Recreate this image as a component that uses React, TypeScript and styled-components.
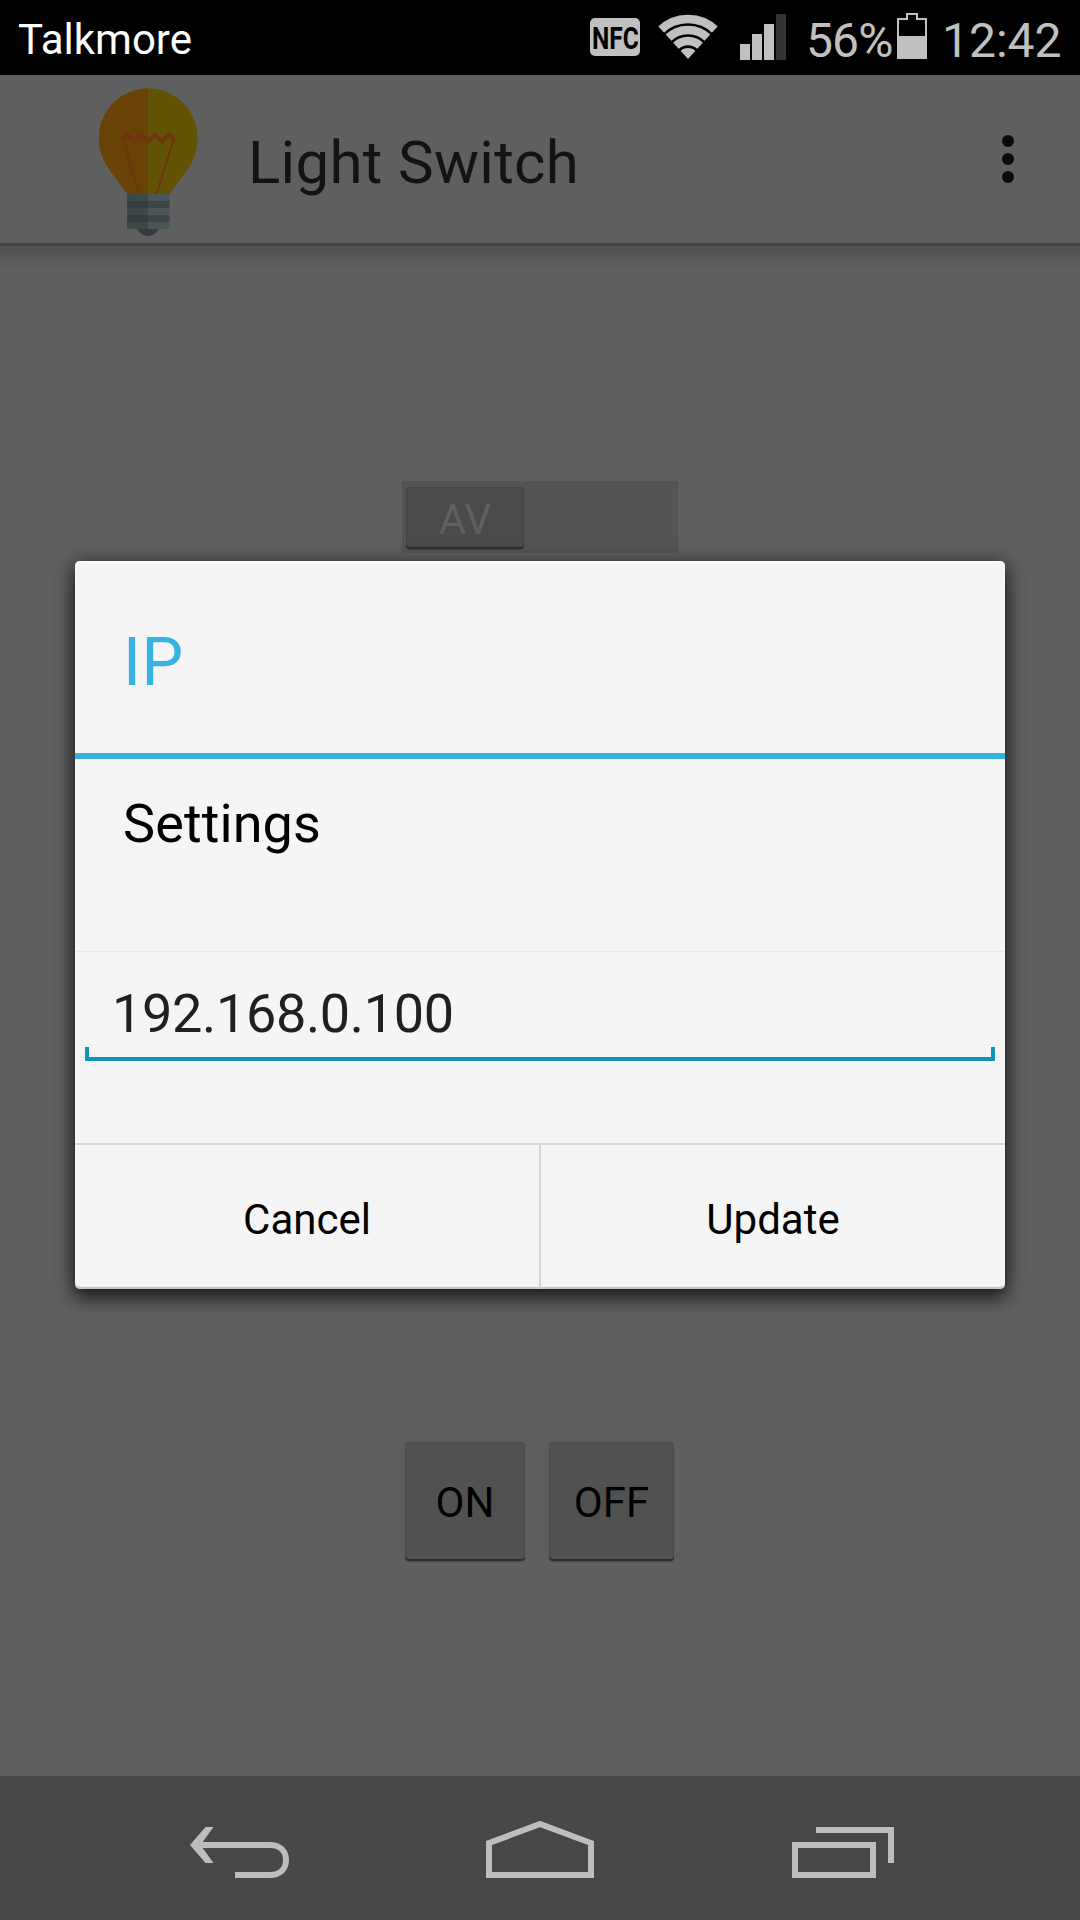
import React from 'react';
import styled, { createGlobalStyle } from 'styled-components';

const GlobalStyle = createGlobalStyle`
  *, *::before, *::after { box-sizing: border-box; }
  body { margin: 0; background: #5f5f5f; }
`;

const Screen = styled.div`
  position: relative;
  display: flex;
  flex-direction: column;
  width: 1080px;
  height: 1920px;
  overflow: hidden;
  background: #5f5f5f;
  font-family: Roboto, 'Noto Sans', sans-serif;
  color: #000;
`;

const Label = styled.span<{ $size: number; $spacing?: number; $color?: string; $weight?: number }>`
  display: block;
  white-space: pre;
  font-size: ${p => p.$size}px;
  line-height: 1.2;
  letter-spacing: ${p => p.$spacing ?? 0}px;
  font-weight: ${p => p.$weight ?? 400};
  color: ${p => p.$color ?? 'inherit'};
`;

const StatusBar = styled.header`
  display: flex;
  align-items: flex-start;
  justify-content: space-between;
  flex: none;
  height: 75px;
  padding: 0 19px 0 18px;
  background: #000;
`;

const Carrier = styled.div`
  padding-top: 15px;
`;

const StatusIcons = styled.div`
  display: flex;
  align-items: flex-start;
`;

const StatusGlyph = styled.svg<{ $gap: number }>`
  display: block;
  flex: none;
  overflow: visible;
  margin-right: ${p => p.$gap}px;
`;

const StatusText = styled.div<{ $width: number }>`
  width: ${p => p.$width}px;
  padding-top: 12px;
`;

const ActionBar = styled.div`
  display: flex;
  align-items: flex-start;
  flex: none;
  height: 171px;
  padding: 11px 66px 0 98px;
  background: #5f5f5f;
  border-bottom: 3px solid #444;
`;

const ActionTitle = styled.h1`
  flex: 1;
  margin: 0;
  padding: 41px 0 0 48px;
`;

const MenuButton = styled.button`
  display: flex;
  flex-direction: column;
  gap: 6px;
  margin-top: 49px;
  padding: 0;
  border: 0;
  background: none;
`;

const Dot = styled.i`
  width: 12px;
  height: 12px;
  border-radius: 50%;
  background: #0c0c0c;
`;

const Content = styled.main`
  display: flex;
  flex-direction: column;
  align-items: center;
  justify-content: space-between;
  flex: 1;
  padding: 235px 0 215px;
  background: linear-gradient(#505050, #5a5a5a 14px, #5f5f5f 26px);
`;

const Toggle = styled.div`
  width: 276px;
  height: 72px;
  padding: 6px 4px;
  background: #545454;
`;

const Raised = styled.button<{ $width: number; $height: number; $face: string }>`
  display: flex;
  align-items: center;
  justify-content: center;
  width: ${p => p.$width}px;
  height: ${p => p.$height}px;
  padding: 4px 0 0;
  border: 0;
  border-radius: 4px;
  background: ${p => p.$face};
  box-shadow: inset 0 -2px 0 #303030, inset 0 0 0 1px rgba(0, 0, 0, 0.08), 0 1px 1px rgba(0, 0, 0, 0.2);
  font-family: inherit;
  color: #000;
`;

const ButtonRow = styled.div`
  display: flex;
  gap: 24px;
  padding-right: 1px;
`;

const Dialog = styled.section`
  position: absolute;
  top: 561px;
  left: 75px;
  display: flex;
  flex-direction: column;
  width: 930px;
  height: 728px;
  border-radius: 5px;
  background: #f5f5f5;
  box-shadow: 0 8px 18px 1px rgba(0, 0, 0, 0.65), 0 0 20px rgba(0, 0, 0, 0.25),
    inset 0 2px 1px #fff, inset 0 -2px 0 #c6c6c6;
`;

const DialogTitle = styled.div`
  height: 198px;
  padding: 62px 48px 0;
  border-bottom: 6px solid #36b3e0;
`;

const DialogMessage = styled.div`
  height: 193px;
  padding: 33px 48px 0;
  border-bottom: 1px solid #e8e8e8;
`;

const DialogField = styled.div`
  flex: 1;
  padding: 29px 10px 0;
`;

const FieldText = styled.div`
  padding: 1px 0 0 27px;
  height: 66px;
`;

const Underline = styled.div`
  height: 14px;
  border: 4px solid #1092bb;
  border-top: 0;
`;

const DialogActions = styled.div`
  display: flex;
  height: 146px;
  border-top: 2px solid #d6d6d6;
`;

const DialogButton = styled.button<{ $divided?: boolean }>`
  display: flex;
  flex: 1;
  justify-content: center;
  align-items: flex-start;
  padding: 50px 0 0;
  border: 0;
  border-right: ${p => (p.$divided ? '2px solid #d6d6d6' : '0')};
  background: none;
  font-family: inherit;
  color: #000;
`;

const NavBar = styled.nav`
  display: flex;
  align-items: flex-start;
  gap: 197px;
  flex: none;
  height: 144px;
  padding: 45px 0 0 190px;
  background: #474747;
`;

const NavIcon = styled.svg`
  display: block;
  flex: none;
  fill: none;
  stroke: #bcbdbd;
  stroke-width: 6;
`;

const Bulb = () => (
  <svg width="102" height="152" viewBox="98 86 102 152">
    <defs>
      <clipPath id="bulb-left"><rect x="90" y="80" width="58" height="160" /></clipPath>
    </defs>
    <path d="M148.500 88.500C121 88.500 99 110.500 99 138C99 148 101.500 157 107 166C113 176 120.500 183 127 194H170C176.500 183 184 176 190 166C195.500 157 197.500 148 197.500 138C197.500 110.500 176 88.500 148.500 88.500Z" fill="#625204" />
    <path clipPath="url(#bulb-left)" d="M148.500 88.500C121 88.500 99 110.500 99 138C99 148 101.500 157 107 166C113 176 120.500 183 127 194H170V88Z" fill="#694305" />
    <g fill="none" stroke="#6e3510">
      <path d="M122.500 139L127.500 134.500L134 141L141.500 134.500L148.500 141L155 134.500L162 141L169 134.500L174 139" strokeWidth="4" />
      <path d="M122.500 138L139.500 194M174 138L156.500 194" strokeWidth="2.200" />
    </g>
    <path d="M137 228H159C157 233 153 236 148 236S139 233 137 228Z" fill="#343d3d" />
    <rect x="127" y="194" width="42.500" height="35" fill="#4c5656" />
    <path d="M127 201H169.500V208H127ZM127 215H169.500V222H127Z" fill="#3c4646" />
    <rect x="127" y="194" width="21" height="35" fill="#283030" opacity=".38" />
  </svg>
);

export default function App() {
  return (
    <Screen>
      <GlobalStyle />
      <StatusBar>
        <Carrier><Label $size={42} $color="#fff" $spacing={0}>Talkmore</Label></Carrier>
        <StatusIcons>
          <StatusGlyph $gap={18} width="50" height="75" viewBox="590 0 50 75">
            <rect x="590" y="18" width="50" height="38" rx="5" fill="#c0c0c0" />
            <text transform="translate(592 49) scale(.79 1)" fontSize="31" fontWeight="700">NFC</text>
          </StatusGlyph>
          <StatusGlyph $gap={22} width="60" height="75" viewBox="658 0 60 75">
            <defs>
              <clipPath id="wifi-fan"><path d="M688 59L648 15V0H728V15Z" /></clipPath>
            </defs>
            <g clipPath="url(#wifi-fan)" fill="none" stroke="#c0c0c0" strokeWidth="8.600">
              <circle cx="688" cy="59" r="11" fill="#c0c0c0" stroke="none" />
              <circle cx="688" cy="59" r="18" />
              <circle cx="688" cy="59" r="29" />
              <circle cx="688" cy="59" r="40" />
            </g>
          </StatusGlyph>
          <StatusGlyph $gap={20} width="46" height="75" viewBox="740 0 46 75">
            <path fill="#c0c0c0" d="M740 44h10v16h-10zM752 34h10v26h-10zM764 24h10v36h-10z" />
            <path fill="#333" d="M776 14h10v46h-10z" />
          </StatusGlyph>
          <StatusText $width={91}><Label $size={48} $color="#c0c0c0" $spacing={-0.9}>56%</Label></StatusText>
          <StatusGlyph $gap={15} width="30" height="75" viewBox="897 0 30 75">
            <path d="M898 19H907V14H917V19H926V58H898Z" fill="none" stroke="#c0c0c0" strokeWidth="2" />
            <path d="M897 36h30v23h-30z" fill="#c0c0c0" />
          </StatusGlyph>
          <StatusText $width={119}><Label $size={48} $color="#c0c0c0">12:42</Label></StatusText>
        </StatusIcons>
      </StatusBar>

      <ActionBar>
        <Bulb />
        <ActionTitle><Label $size={60} $color="#131313" $spacing={0.3}>Light Switch</Label></ActionTitle>
        <MenuButton aria-label="More options"><Dot /><Dot /><Dot /></MenuButton>
      </ActionBar>

      <Content>
        <Toggle>
          <Raised $width={118} $height={62} $face="#4a4a4a">
            <Label $size={42} $color="#606060">AV</Label>
          </Raised>
        </Toggle>
        <ButtonRow>
          <Raised $width={120} $height={119} $face="#515151"><Label $size={42}>ON</Label></Raised>
          <Raised $width={125} $height={119} $face="#515151"><Label $size={42}>OFF</Label></Raised>
        </ButtonRow>
      </Content>

      <NavBar>
        <NavIcon width="99" height="58" viewBox="190 1821 99 58">
          <path d="M198 1845H270C280 1845 286 1851 286 1860S280 1875 270 1875H235" />
          <path d="M205.500 1827H213.500L200.500 1845L213.500 1863H205.500L190 1845Z" fill="#bcbdbd" stroke="none" />
        </NavIcon>
        <NavIcon width="108" height="58" viewBox="486 1821 108 58">
          <path d="M489 1843L540 1824L591 1843V1875H489Z" />
        </NavIcon>
        <NavIcon width="104" height="58" viewBox="791 1821 104 58">
          <path d="M795 1845H873V1875H795ZM816 1830H891V1863" />
        </NavIcon>
      </NavBar>

      <Dialog role="dialog">
        <DialogTitle><Label $size={66} $color="#36b3e0" $spacing={0.6}>IP</Label></DialogTitle>
        <DialogMessage><Label $size={54} $spacing={0.1}>Settings</Label></DialogMessage>
        <DialogField>
          <FieldText><Label $size={54} $color="#202020" $spacing={-0.35}>192.168.0.100</Label></FieldText>
          <Underline />
        </DialogField>
        <DialogActions>
          <DialogButton $divided><Label $size={42}>Cancel</Label></DialogButton>
          <DialogButton><Label $size={42}>Update</Label></DialogButton>
        </DialogActions>
      </Dialog>
    </Screen>
  );
}
